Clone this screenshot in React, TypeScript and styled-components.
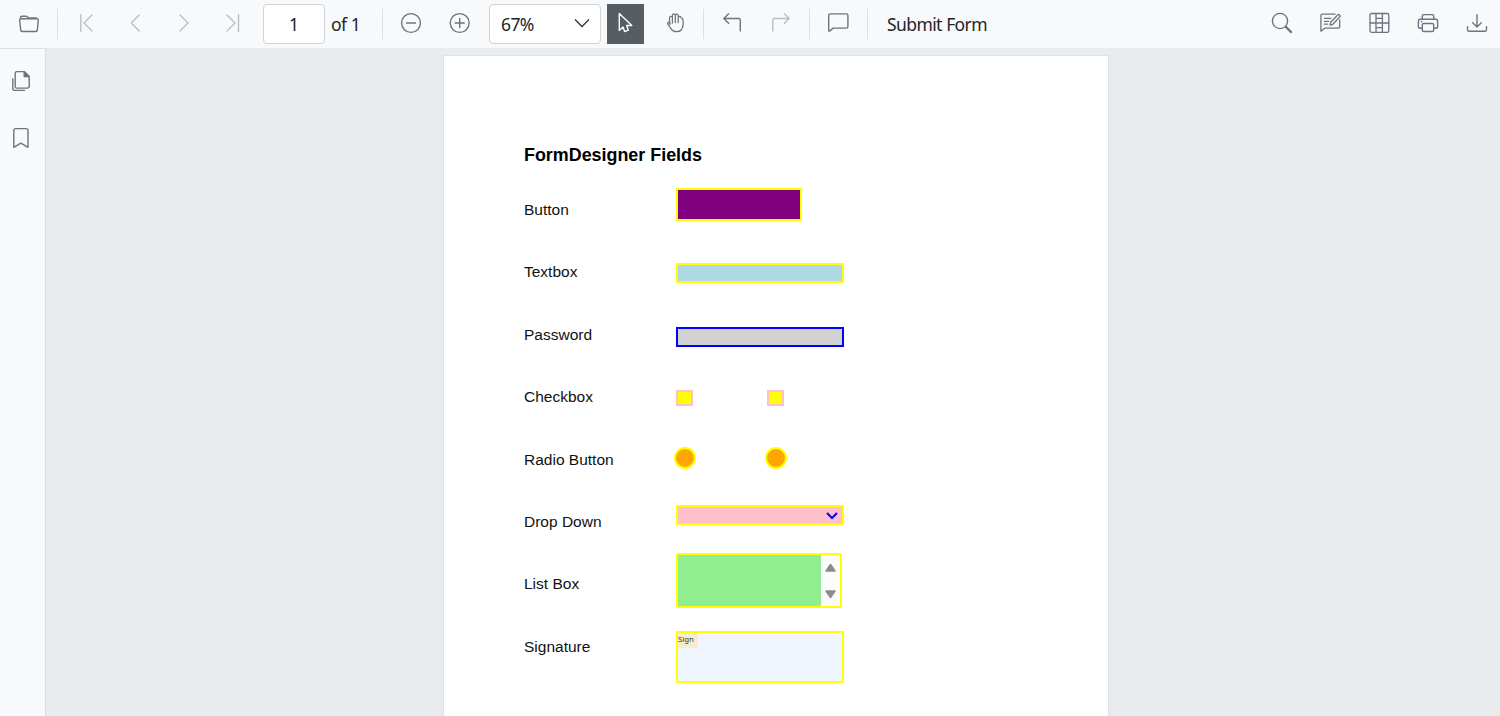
import React from "react";
import styled, { createGlobalStyle } from "styled-components";

const GlobalStyle = createGlobalStyle`
  *, *::before, *::after { box-sizing: border-box; }
  html, body { margin: 0; padding: 0; overflow: hidden; }
`;

const Viewer = styled.div`
  width: 1500px;
  height: 716px;
  display: flex;
  flex-direction: column;
  overflow: hidden;
  background: #e8ecef;
  font-family: "Noto Sans", "Open Sans", sans-serif;
  color: #212529;
`;

const Toolbar = styled.header`
  height: 48px;
  flex: none;
  display: flex;
  align-items: center;
  background: #f8f9fb;
`;

const ToolButton = styled.button<{ $gap?: number; $muted?: boolean }>`
  width: 24px;
  height: 24px;
  margin: 0 0 2px ${(p) => p.$gap ?? 25}px;
  padding: 0;
  border: 0;
  background: none;
  flex: none;
  color: ${(p) => (p.$muted ? "#bbbec3" : "#6c757d")};
`;

const Separator = styled.span<{ $gap: number }>`
  width: 1px;
  height: 30px;
  flex: none;
  margin-left: ${(p) => p.$gap}px;
  background: #dcdfe3;
`;

const PageInput = styled.div`
  width: 62px;
  height: 40px;
  flex: none;
  margin-left: 18px;
  padding-bottom: 1px;
  display: flex;
  align-items: center;
  justify-content: center;
  border: 1px solid #ced4da;
  border-radius: 4px;
  background: #fff;
  font-size: 17.5px;
`;

const ToolText = styled.span<{ $gap: number; $width: number }>`
  margin-left: ${(p) => p.$gap}px;
  width: ${(p) => p.$width}px;
  flex: none;
  white-space: nowrap;
  font-size: 17.5px;
  line-height: 24px;
  letter-spacing: -0.6px;
  word-spacing: 0.4px;
`;

const ZoomSelect = styled.div`
  width: 112px;
  height: 40px;
  flex: none;
  margin-left: 17px;
  padding: 0 10px 0 11px;
  display: flex;
  align-items: center;
  justify-content: space-between;
  border: 1px solid #ced4da;
  border-radius: 4px;
  background: #fff;
  font-size: 17.5px;
  letter-spacing: -0.6px;

  svg {
    margin-bottom: 3px;
  }
`;

const SelectionTool = styled.button`
  width: 37px;
  height: 40px;
  flex: none;
  margin: 0 0 0 6px;
  padding: 0 1px 2px 0;
  display: flex;
  align-items: center;
  justify-content: center;
  border: 0;
  background: #565e64;
  color: #fff;
`;

const RightTools = styled.div`
  margin-left: auto;
  padding-right: 11px;
  display: flex;
`;

const Body = styled.div`
  flex: 1;
  min-height: 0;
  display: flex;
`;

const Sidebar = styled.nav`
  width: 46px;
  flex: none;
  padding: 20px 0 0 9px;
  display: flex;
  flex-direction: column;
  gap: 33px;
  border-top: 1px solid #dcdfe3;
  border-right: 1px solid #dcdfe3;
  background: #f8f9fb;
  color: #6c757d;
`;

const Canvas = styled.main`
  flex: 1;
  padding: 7px 0 0 397px;
`;

const Page = styled.article`
  width: 666px;
  height: 700px;
  padding: 87px 0 0 80px;
  border: 1px solid #dee2e6;
  background: #fff;
  color: #000;
  font-family: "Liberation Sans", Arial, sans-serif;
`;

const Title = styled.h1`
  margin: 0;
  height: 36px;
  font-size: 17.9px;
  line-height: 24px;
  font-weight: 700;
`;

const Row = styled.div<{ $height: number }>`
  height: ${(p) => p.$height}px;
  display: grid;
  grid-template-columns: 152px 91px 91px;
  align-items: start;
`;

const Label = styled.span`
  font-size: 15.5px;
  line-height: 62px;
  color: #111;
`;

const Field = styled.div<{ $w: number; $h: number; $top: number; $fill: string; $line?: string; $radius?: number }>`
  width: ${(p) => p.$w}px;
  height: ${(p) => p.$h}px;
  margin-top: ${(p) => p.$top}px;
  border: 2px solid ${(p) => p.$line ?? "yellow"};
  border-radius: ${(p) => p.$radius ?? 0}px;
  background: ${(p) => p.$fill};
  display: flex;
  overflow: hidden;
`;

const Radio = styled.span`
  width: 22px;
  height: 22px;
  margin: 18px 0 0 -2px;
  border: 2px solid yellow;
  border-radius: 50%;
  background: orange;
`;

const DropArrow = styled.svg`
  margin: 4px 4px 0 auto;
`;

const Scrollbar = styled.div`
  width: 19px;
  margin-left: auto;
  padding: 8px 0 7px;
  display: flex;
  flex-direction: column;
  align-items: center;
  justify-content: space-between;
  background: #fcfcfc;
`;

const SignTag = styled.span`
  width: 20px;
  height: 15px;
  background: #f6edcf;
  color: #333;
  font: 7.8px/13px "Noto Sans", sans-serif;
`;

const IconSvg = styled.svg`
  display: block;
  fill: none;
  stroke: currentColor;
  stroke-linecap: round;
  stroke-linejoin: round;
`;

const Glyph = ({ children, w = 1.4 }: { children: React.ReactNode; w?: number }) => (
  <IconSvg width="24" height="24" viewBox="0 0 24 24" strokeWidth={w}>
    {children}
  </IconSvg>
);

export default function App() {
  return (
    <>
      <GlobalStyle />
      <Viewer>
        <Toolbar>
          <ToolButton $gap={17} aria-label="Open">
            <Glyph>
              <path d="M4 7.8h16a1.3 1.3 0 0 1 1.3 1.5l-1 9.9a1.5 1.5 0 0 1-1.5 1.3H5.2a1.5 1.5 0 0 1-1.5-1.3l-1-9.9A1.3 1.3 0 0 1 4 7.8ZM3.5 7.8V6.6a1.4 1.4 0 0 1 1.4-1.4h4.2a1.4 1.4 0 0 1 1 .4l1.5 1.4h7.6" />
            </Glyph>
          </ToolButton>
          <Separator $gap={16} />
          <ToolButton $gap={16} $muted aria-label="First page">
            <Glyph><path d="M6.8 3.5v17M18 4l-8 8 8 8" /></Glyph>
          </ToolButton>
          <ToolButton $muted aria-label="Previous page">
            <Glyph><path d="M16.2 4l-8 8 8 8" /></Glyph>
          </ToolButton>
          <ToolButton $muted aria-label="Next page">
            <Glyph><path d="M8 4l8 8-8 8" /></Glyph>
          </ToolButton>
          <ToolButton $muted aria-label="Last page">
            <Glyph><path d="M17.5 3.5v17M6 4l8 8-8 8" /></Glyph>
          </ToolButton>
          <PageInput>1</PageInput>
          <ToolText $gap={6} $width={51}>of 1</ToolText>
          <Separator $gap={0} />
          <ToolButton $gap={16} aria-label="Zoom out">
            <Glyph><circle cx="12" cy="12" r="9.4" /><path d="M7.5 12h9" /></Glyph>
          </ToolButton>
          <ToolButton aria-label="Zoom in">
            <Glyph><circle cx="11.7" cy="12" r="9.4" /><path d="M7.2 12h9M11.7 7.5v9" /></Glyph>
          </ToolButton>
          <ZoomSelect>
            67%
            <svg width="16" height="10" viewBox="0 0 16 10" fill="none" stroke="#343a40" strokeWidth="1.4">
              <path d="M1 1.5l7 7 7-7" />
            </svg>
          </ZoomSelect>
          <SelectionTool aria-label="Select">
            <Glyph>
              <path d="M6.3 2.6v16.8l3.7-3.4 1.6 4.6 3.7-1.4-1.6-4.7h5.1Z" />
            </Glyph>
          </SelectionTool>
          <ToolButton $gap={19} aria-label="Pan">
            <Glyph w={1.25}>
              <path d="M6.5 13V6.8a1.45 1.45 0 0 1 2.9 0V12M9.4 6.2V4.4a1.45 1.45 0 0 1 2.9 0V11.5M12.3 4.6a1.45 1.45 0 0 1 2.9 0v6.9M15.2 6.8a1.45 1.45 0 0 1 2.9 0l1.8 1.5c.6 3.9.6 7.5-1.7 10.7-.9 1.1-2.2 1.7-4.3 1.7-2.9 0-4.9-1.2-6.1-3.3l-2.9-4.2c-.7-1.1 0-2 .9-2.1.9-.1 1.2.6 1.6 1.9" />
            </Glyph>
          </ToolButton>
          <Separator $gap={16} />
          <ToolButton $gap={16} aria-label="Undo">
            <Glyph><path d="M8.6 2.7L3.8 7.5l4.8 4.8M4 7.5h14.7a1.6 1.6 0 0 1 1.6 1.6v10.8" /></Glyph>
          </ToolButton>
          <ToolButton $gap={24} $muted aria-label="Redo">
            <Glyph><path d="M16.4 2.7l4.8 4.8-4.8 4.8M21 7.5H6.4A1.6 1.6 0 0 0 4.8 9.1v10.8" /></Glyph>
          </ToolButton>
          <Separator $gap={17} />
          <ToolButton $gap={16} aria-label="Comment">
            <Glyph><path d="M4.3 2.9h16a1.6 1.6 0 0 1 1.6 1.6v11a1.6 1.6 0 0 1-1.6 1.6H7.1l-3.8 3.1c-.3.2-.6.1-.6-.4V4.5a1.6 1.6 0 0 1 1.6-1.6Z" /></Glyph>
          </ToolButton>
          <Separator $gap={17} />
          <ToolText $gap={19} $width={110}>Submit Form</ToolText>
          <RightTools>
            <ToolButton $gap={0} aria-label="Search">
              <Glyph><circle cx="10" cy="10" r="7.6" /><path d="M16 16l5 5" strokeWidth="2.4" /></Glyph>
            </ToolButton>
            <ToolButton $gap={24} aria-label="Edit annotations">
              <Glyph w={1.3}>
                <path d="M17 3.2H4.3a1.4 1.4 0 0 0-1.4 1.4v15.6l3.9-3h13.5a1.4 1.4 0 0 0 1.4-1.4V9M6.3 7.3h6.5M6.3 10.3h4.4M6.3 13.2h3.2M12 14.2l.7-3 7.2-7.4a1 1 0 0 1 1.4 0l.6.6a1 1 0 0 1 0 1.4l-7.1 7.5Z" />
              </Glyph>
            </ToolButton>
            <ToolButton aria-label="Form fields">
              <Glyph w={1.3}>
                <rect x="3" y="2.5" width="18.8" height="18.8" rx="1.6" />
                <path d="M9 2.5v18.8M15.4 2.5v18.8M3 12h18.8M9 7.3h6.4M9 16.6h6.4" />
              </Glyph>
            </ToolButton>
            <ToolButton aria-label="Print">
              <Glyph>
                <path d="M6.3 8.3V5.1a1.5 1.5 0 0 1 1.5-1.5h8.4a1.5 1.5 0 0 1 1.5 1.5v3.2M6.3 17.2H4.2a1.8 1.8 0 0 1-1.8-1.8v-5.3a1.8 1.8 0 0 1 1.8-1.8h15.6a1.8 1.8 0 0 1 1.8 1.8v5.3a1.8 1.8 0 0 1-1.8 1.8h-2.1" />
                <rect x="6.3" y="12.5" width="11.4" height="8" rx="1.5" />
                <path d="M5.3 10.8h.4" />
              </Glyph>
            </ToolButton>
            <ToolButton aria-label="Download">
              <Glyph><path d="M12 3.6v12M7.7 11.8L12 16l4.3-4.2M2.5 15.8v2.9a1.6 1.6 0 0 0 1.6 1.6h15.8a1.6 1.6 0 0 0 1.6-1.6v-2.9" /></Glyph>
            </ToolButton>
          </RightTools>
        </Toolbar>
        <Body>
          <Sidebar>
            <Glyph>
              <path d="M7.9 2.6h7.3l5 4.9v9.9a1.7 1.7 0 0 1-1.7 1.7H7.9a1.7 1.7 0 0 1-1.7-1.7V4.3a1.7 1.7 0 0 1 1.7-1.7ZM3.8 10v9.6a1.8 1.8 0 0 0 1.8 1.8h9.8" />
              <path d="M15.2 2.8v4.7h4.8Z" fill="currentColor" />
            </Glyph>
            <Glyph>
              <path d="M6.6 2.6h10.6a1.8 1.8 0 0 1 1.8 1.8v16.9l-7.1-4.2-7.1 4.2V4.4a1.8 1.8 0 0 1 1.8-1.8Z" />
            </Glyph>
          </Sidebar>
          <Canvas>
            <Page>
              <Title>FormDesigner Fields</Title>
              <Row $height={62}>
                <Label>Button</Label>
                <Field $w={126} $h={33} $top={9} $fill="purple" />
              </Row>
              <Row $height={63}>
                <Label>Textbox</Label>
                <Field $w={168} $h={20} $top={22} $fill="lightblue" />
              </Row>
              <Row $height={62}>
                <Label>Password</Label>
                <Field $w={168} $h={20} $top={23} $fill="lightgray" $line="blue" />
              </Row>
              <Row $height={63}>
                <Label>Checkbox</Label>
                <Field $w={17} $h={16} $top={24} $fill="yellow" $line="pink" />
                <Field $w={17} $h={16} $top={24} $fill="yellow" $line="pink" />
              </Row>
              <Row $height={62}>
                <Label>Radio Button</Label>
                <Radio />
                <Radio />
              </Row>
              <Row $height={62}>
                <Label>Drop Down</Label>
                <Field $w={168} $h={20} $top={14} $fill="pink">
                  <DropArrow width="12" height="10" viewBox="0 0 12 10" fill="none" stroke="blue" strokeWidth="2">
                    <path d="M1 2l5 5 5-5" />
                  </DropArrow>
                </Field>
              </Row>
              <Row $height={63}>
                <Label>List Box</Label>
                <Field $w={166} $h={55} $top={0} $fill="lightgreen" $radius={2}>
                  <Scrollbar>
                    <svg width="11" height="9" viewBox="0 0 11 9"><path d="M5.5 1.5L10 8H1Z" fill="#8b8b8b" stroke="#8b8b8b" strokeWidth="1.5" strokeLinejoin="round" /></svg>
                    <svg width="11" height="9" viewBox="0 0 11 9"><path d="M1 1h9L5.5 7.5Z" fill="#8b8b8b" stroke="#8b8b8b" strokeWidth="1.5" strokeLinejoin="round" /></svg>
                  </Scrollbar>
                </Field>
              </Row>
              <Row $height={62}>
                <Label>Signature</Label>
                <Field $w={168} $h={52} $top={15} $fill="#f1f5ff">
                  <SignTag>Sign</SignTag>
                </Field>
              </Row>
            </Page>
          </Canvas>
        </Body>
      </Viewer>
    </>
  );
}
